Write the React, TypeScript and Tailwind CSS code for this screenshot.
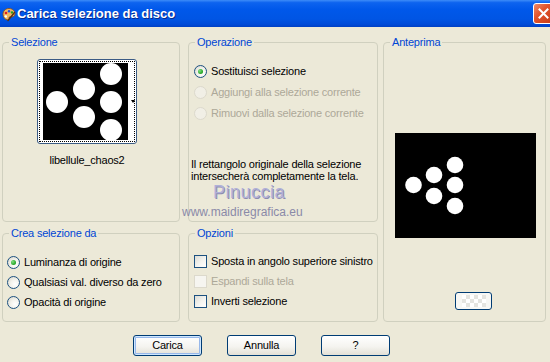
import type { ReactNode } from "react";

type GroupProps = {
  title: string;
  className?: string;
  children?: ReactNode;
};

function Group({ title, className = "", children }: GroupProps) {
  return (
    <fieldset className={`rounded-[4px] border border-[#d0d0bf] ${className}`}>
      <legend className="ml-[6px] px-[2px] leading-[12px] text-[#0046d5]">{title}</legend>
      {children}
    </fieldset>
  );
}

type OptionProps = {
  label: string;
  checked?: boolean;
  disabled?: boolean;
  rowClass?: string;
};

function Radio({ label, checked = false, disabled = false, rowClass = "h-[20px]" }: OptionProps) {
  return (
    <div className={`flex items-center ${rowClass}`}>
      <span
        className={`flex h-[13px] w-[13px] shrink-0 items-center justify-center rounded-full border ${
          disabled
            ? "border-[#dcd9cc] bg-[#f1efe6]"
            : "border-[#1c5180] bg-[radial-gradient(circle_at_65%_65%,#ffffff_0%,#f3f2ec_45%,#d4d2c8_100%)]"
        }`}
      >
        {checked && (
          <span className="h-[5px] w-[5px] rounded-full bg-[radial-gradient(circle_at_35%_35%,#7ee07e,#21a121_70%)]" />
        )}
      </span>
      <span className={`ml-[4px] whitespace-nowrap ${disabled ? "text-[#aca899]" : "text-black"}`}>{label}</span>
    </div>
  );
}

function Checkbox({ label, disabled = false }: OptionProps) {
  return (
    <div className="flex h-[20px] items-center">
      <span
        className={`h-[13px] w-[13px] shrink-0 border ${
          disabled
            ? "border-[#dcd9cc] bg-[#f6f5f0]"
            : "border-[#1c5180] bg-[linear-gradient(135deg,#dcdcd5_0%,#f4f4f0_55%,#ffffff_100%)]"
        }`}
      />
      <span className={`ml-[4px] whitespace-nowrap ${disabled ? "text-[#aca899]" : "text-black"}`}>{label}</span>
    </div>
  );
}

function XpButton({ label, isDefault = false }: { label: string; isDefault?: boolean }) {
  return (
    <button
      type="button"
      className={`flex h-[21px] w-[69px] items-center justify-center rounded-[3px] border border-[#003c74] bg-[linear-gradient(to_bottom,#ffffff_0%,#f5f4f0_55%,#e3e0d6_100%)] text-black ${
        isDefault ? "shadow-[inset_0_0_0_1px_#cee7ff,inset_0_0_0_2px_#98b8ea]" : ""
      }`}
    >
      {label}
    </button>
  );
}

const thumbDots = [
  [14, 39],
  [41, 26],
  [41, 54],
  [68, 11],
  [68, 39],
  [68, 67],
];

const previewDots = [
  [18.5, 52],
  [39, 42],
  [39, 63],
  [60, 32],
  [60, 52],
  [60, 73],
];

function PaletteIcon() {
  return (
    <svg width="14" height="15" viewBox="0 0 14 15">
      <path d="M7 1.5C3.5 1.5 1 4 1 7.2c0 3 2.2 5.6 5 5.8 1.3.1 1.6-.8 1.1-1.6-.5-.8.1-1.6 1-1.5 2.6.2 4.9-.6 4.9-3.3C13 4 10.5 1.5 7 1.5z" fill="#f0b860" stroke="#8a4a10" strokeWidth="0.8" />
      <circle cx="4" cy="6" r="1.3" fill="#e02020" />
      <circle cx="7" cy="4.2" r="1.2" fill="#2050e0" />
      <circle cx="10" cy="5.4" r="1.2" fill="#20a020" />
      <circle cx="3.8" cy="9.4" r="1.2" fill="#ffffff" />
      <path d="M6 13.5l6.5-8" stroke="#5a3010" strokeWidth="1.4" strokeLinecap="round" />
    </svg>
  );
}

export default function App() {
  return (
    <div className="h-[362px] w-[550px] overflow-hidden bg-[#ece9d8] font-['Liberation_Sans',Arial,sans-serif] text-[11px] leading-[13px] tracking-[-0.2px] text-black">
      <div className="flex h-[27px] items-center bg-[linear-gradient(to_bottom,#3d8cf8_0%,#0d63ef_10%,#0058ea_35%,#0055e4_70%,#004bd8_90%,#0040c4_100%)]">
        <div className="ml-[2px] mt-[1px]">
          <PaletteIcon />
        </div>
        <span className="ml-[1px] text-[13px] font-bold tracking-[0px] text-white [text-shadow:1px_1px_0_#0a2a8a]">
          Carica selezione da disco
        </span>
        <div className="ml-auto mr-[-4px] flex h-[21px] w-[21px] items-center justify-center rounded-[3px] border border-white bg-[linear-gradient(135deg,#ef8a6a_0%,#e2542c_40%,#c53a17_100%)]">
          <svg width="11" height="11" viewBox="0 0 11 11">
            <path d="M1.5 1.5l8 8M9.5 1.5l-8 8" stroke="#ffffff" strokeWidth="2" strokeLinecap="square" />
          </svg>
        </div>
      </div>

      <div className="relative pl-[2px] pt-[9px]">
        <div className="flex">
          <div className="flex w-[178px] flex-col gap-[5px]">
            <Group title="Selezione" className="h-[186px]">
              <div className="ml-[34px] mt-[11px] w-[100px]">
                <div className="h-[85px] w-[100px] rounded-[3px] border border-[#3b5b84] bg-white p-px">
                  <div className="relative h-full border border-dotted border-black pl-[3px] pt-px">
                    <svg width="85" height="77" className="block">
                      <rect width="85" height="77" fill="#000" />
                      {thumbDots.map(([cx, cy]) => (
                        <circle key={`${cx}-${cy}`} cx={cx} cy={cy} r="11" fill="#fff" />
                      ))}
                    </svg>
                    <span className="absolute left-[91px] top-[38px] h-0 w-0 border-l-[2px] border-r-[2px] border-t-[3px] border-l-transparent border-r-transparent border-t-black" />
                  </div>
                </div>
                <div className="mt-[10px] text-center">libellule_chaos2</div>
              </div>
            </Group>

            <Group title="Crea selezione da" className="h-[95px]">
              <div className="mt-[13px] pl-[4px]">
                <Radio label="Luminanza di origine" checked />
                <Radio label="Qualsiasi val. diverso da zero" />
                <Radio label="Opacità di origine" />
              </div>
            </Group>
          </div>

          <div className="ml-[8px] flex w-[190px] flex-col gap-[5px]">
            <Group title="Operazione" className="h-[186px]">
              <div className="mt-[13px] pl-[5px]">
                <Radio label="Sostituisci selezione" checked rowClass="h-[21px]" />
                <Radio label="Aggiungi alla selezione corrente" disabled rowClass="h-[21px]" />
                <Radio label="Rimuovi dalla selezione corrente" disabled rowClass="h-[21px]" />
              </div>
              <p className="mt-[34px] pl-[2px] leading-[12px]">
                Il rettangolo originale della selezione
                <br />
                intersecherà completamente la tela.
              </p>
            </Group>

            <Group title="Opzioni" className="h-[95px]">
              <div className="mt-[12px] pl-[5px]">
                <Checkbox label="Sposta in angolo superiore sinistro" />
                <Checkbox label="Espandi sulla tela" disabled />
                <Checkbox label="Inverti selezione" />
              </div>
            </Group>
          </div>

          <Group title="Anteprima" className="ml-[5px] h-[286px] w-[163px]">
            <div className="ml-[11px] mt-[85px]">
              <svg width="141" height="105" className="block">
                <rect width="141" height="105" fill="#000" />
                {previewDots.map(([cx, cy]) => (
                  <circle key={`${cx}-${cy}`} cx={cx} cy={cy} r="8.3" fill="#fff" />
                ))}
              </svg>
            </div>
            <div className="ml-[71px] mt-[54px] h-[18px] w-[37px] rounded-[3px] border border-[#003c74] bg-[#f7f7f4] p-[2px]">
              <div className="mx-auto h-full w-[24px] bg-[conic-gradient(#e4e4e0_25%,#ffffff_0_50%,#e4e4e0_0_75%,#ffffff_0)] bg-[length:8px_8px]" />
            </div>
          </Group>
        </div>

        <div className="mt-[13px] flex gap-[25px] pl-[131px]">
          <XpButton label="Carica" isDefault />
          <XpButton label="Annulla" />
          <XpButton label="?" />
        </div>

        <div className="pointer-events-none absolute left-[213px] top-[156px] text-[18px] leading-[18px] tracking-[0.5px] text-[#b0b0d8] [text-shadow:1px_1px_0_#8c8cb0]">
          Pinuccia
        </div>
        <div className="pointer-events-none absolute left-[182px] top-[179px] text-[12px] leading-[12px] tracking-[0px] text-[#8a8aa8]">
          www.maidiregrafica.eu
        </div>
      </div>
    </div>
  );
}
